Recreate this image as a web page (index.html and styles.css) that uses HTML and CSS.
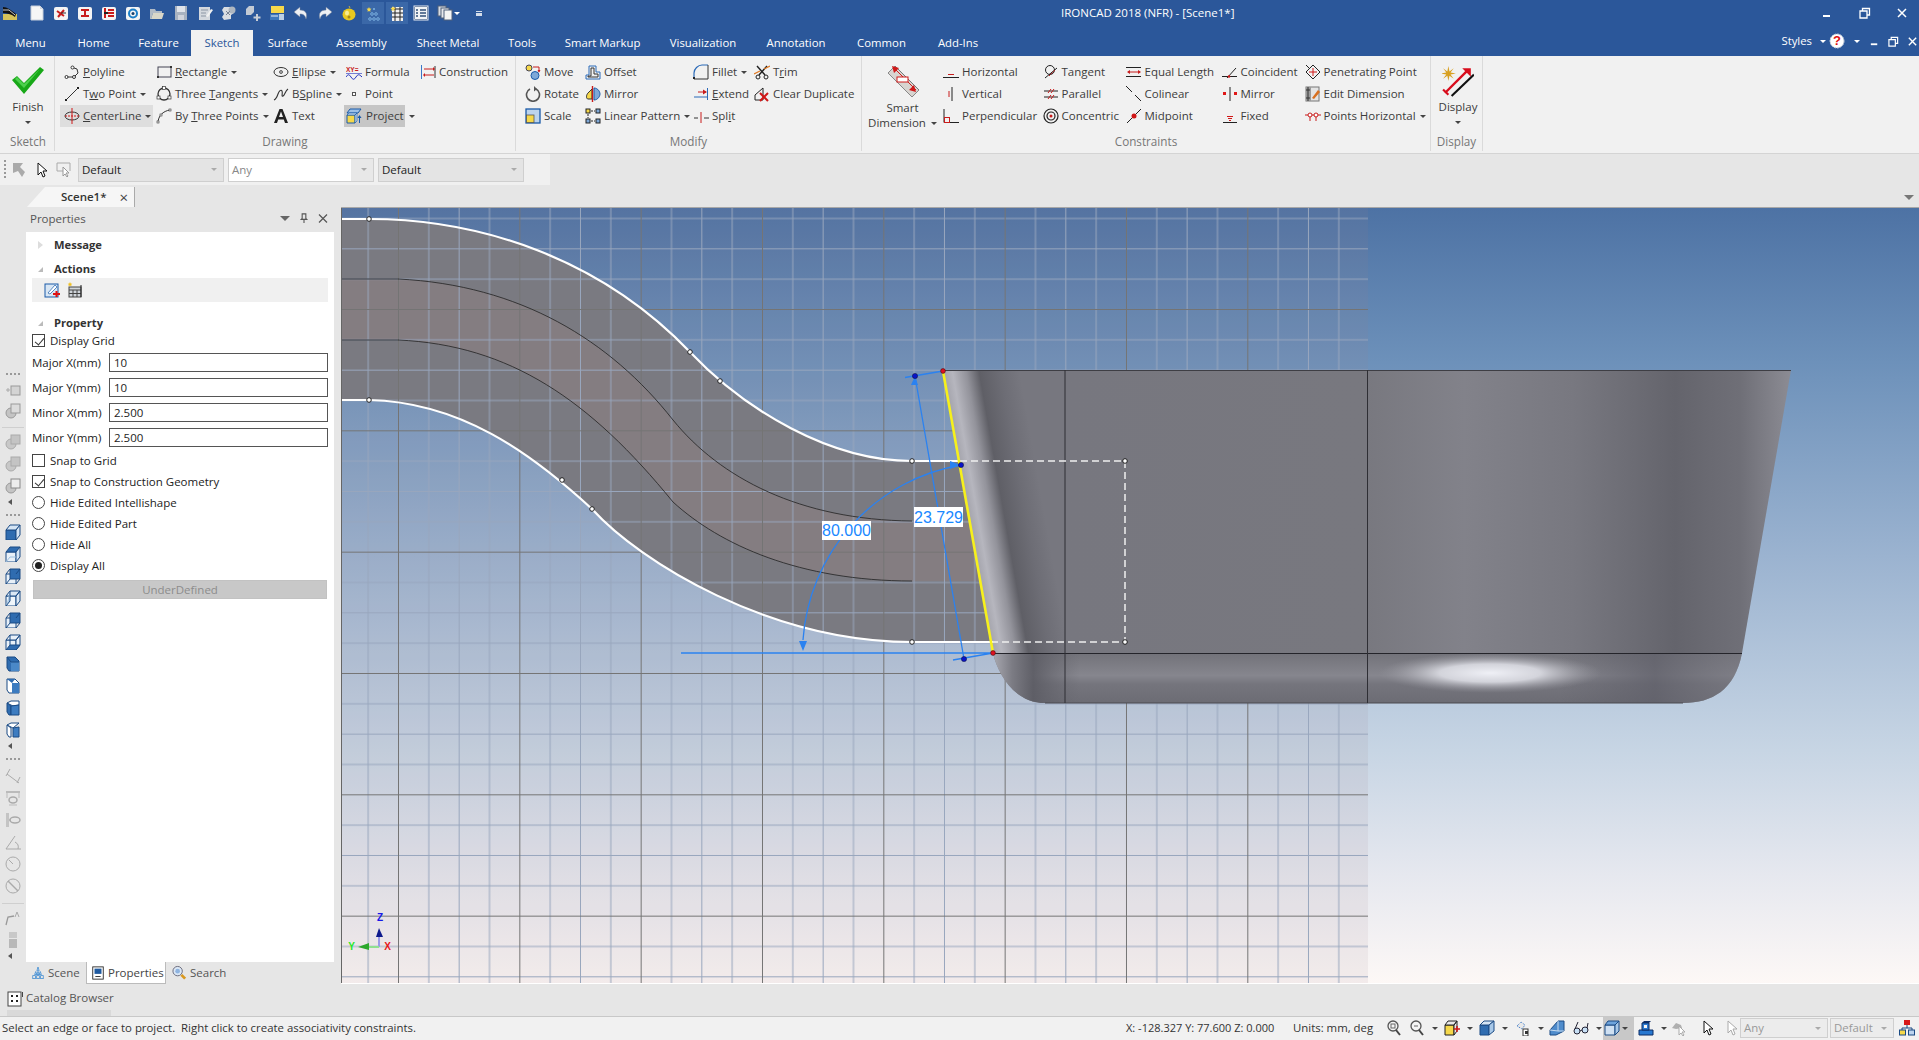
FILE: index.html
```html
<!DOCTYPE html>
<html lang="en">
<head>
<meta charset="utf-8">
<title>IRONCAD 2018 (NFR) - [Scene1*]</title>
<link rel="stylesheet" href="styles.css">
</head>
<body>
<svg class="sprite" aria-hidden="true">
<defs>
<!-- quick access -->
<symbol id="q-logo" viewBox="0 0 16 16"><rect x="1" y="9" width="14" height="6" fill="#d6c35a"/><path d="M1 2c4 0 8 3 13 7l-1 3C9 9 5 8 1 8z" fill="#111"/><path d="M1 5l6 0 6 5" stroke="#ccc" fill="none"/></symbol>
<symbol id="q-new" viewBox="0 0 16 16"><path d="M2 1h9l3 3v11H2z" fill="#f6f6f6" stroke="#c8d0dc"/><path d="M11 1v3h3" fill="#cfd6e0"/></symbol>
<symbol id="q-cross" viewBox="0 0 16 16"><rect x="1" y="2" width="14" height="13" rx="2" fill="#f4f4f4"/><path d="M4 6l7 5M11 5l-6 7" stroke="#c81c1c" stroke-width="2"/><path d="M8 8h5" stroke="#333"/></symbol>
<symbol id="q-i" viewBox="0 0 16 16"><rect x="1" y="2" width="14" height="13" rx="2" fill="#f4f4f4"/><path d="M4 4h8v2H9v4h3v2H4v-2h3V6H4z" fill="#c81c1c"/></symbol>
<symbol id="q-e" viewBox="0 0 16 16"><rect x="1" y="2" width="14" height="13" rx="2" fill="#f4f4f4"/><path d="M4 3v10M7 5h6M7 8h6M7 11h6" stroke="#c81c1c" stroke-width="2"/><path d="M3 8h4" stroke="#222" stroke-width="2"/></symbol>
<symbol id="q-c" viewBox="0 0 16 16"><rect x="1" y="2" width="14" height="13" rx="2" fill="#f4f4f4"/><circle cx="8" cy="8.500" r="4" fill="none" stroke="#1c7fc8" stroke-width="2"/><circle cx="8" cy="8.500" r="1.500" fill="#17406e"/></symbol>
<symbol id="q-open" viewBox="0 0 16 16"><path d="M1 4h5l1 2h6v2H4l-2 6H1z" fill="#b0bac6"/><path d="M4 8h11l-2 6H2z" fill="#d8d6c8"/></symbol>
<symbol id="q-save" viewBox="0 0 16 16"><path d="M2 1h12v14H2z" fill="#a8b2c0"/><rect x="4" y="1" width="8" height="6" fill="#e0e4ea"/><rect x="5" y="10" width="6" height="5" fill="#d0d4dc"/></symbol>
<symbol id="q-sa" viewBox="0 0 16 16"><path d="M2 2h11v13H2z" fill="#d4d8de"/><path d="M4 5h7M4 8h5M4 11h5" stroke="#8c96a4"/><path d="M9 11l5-7 2 1-5 7z" fill="#f0f0f0"/></symbol>
<symbol id="q-gear" viewBox="0 0 16 16"><path d="M3 2h6l4 2v4l-3 2v4l-7 1-2-3 2-3-2-4z" fill="#d9dde2"/><circle cx="11" cy="5" r="3.500" fill="#aeb6c0"/><path d="M5 6l4 4M9 6l-4 4" stroke="#7a8494"/></symbol>
<symbol id="q-boxes" viewBox="0 0 16 16"><path d="M1 4l3-3h5v6l-3 3H1z" fill="#c3cad4"/><path d="M12 9v7M8.500 12.500h7" stroke="#c7cdd6" stroke-width="2"/></symbol>
<symbol id="q-star" viewBox="0 0 16 16"><rect x="2" y="1" width="13" height="7" fill="#f6d84a"/><rect x="1" y="9" width="9" height="6" fill="#3e78bc"/><path d="M10 9h5v6h-5z" fill="#bcd0e6"/><path d="M2 11h7" stroke="#e8eef6"/></symbol>
<symbol id="q-undo" viewBox="0 0 16 16"><path d="M7 2L1 7l6 5V9c3 0 5 1 6 5 2-6-1-9-6-9z" fill="#eef0f4" stroke="#6a7a94" stroke-width=".5"/></symbol>
<symbol id="q-redo" viewBox="0 0 16 16"><path d="M9 2l6 5-6 5V9c-3 0-5 1-6 5C1 8 4 5 9 5z" fill="#eef0f4" stroke="#6a7a94" stroke-width=".5"/></symbol>
<symbol id="q-bulb" viewBox="0 0 16 16"><path d="M8 1l1 2" stroke="#c8b040"/><ellipse cx="8" cy="9.500" rx="6.500" ry="6" fill="#e8c820"/><ellipse cx="6" cy="8" rx="2" ry="2.500" fill="#f8ec90"/><circle cx="8" cy="12" r="1.500" fill="#a88a18"/></symbol>
<symbol id="q-tree" viewBox="0 0 16 16"><path d="M4 2l.7 1.600 1.800.2-1.300 1.200.3 1.800L4 6l-1.500.8.300-1.800-1.300-1.200 1.800-.2z" fill="#f6d84a"/><circle cx="9" cy="4" r="1.100" fill="#7ab0e0"/><circle cx="7" cy="9" r="1.300" fill="none" stroke="#7ab0e0"/><circle cx="11" cy="9" r="1.300" fill="none" stroke="#7ab0e0"/><circle cx="5" cy="14" r="1.300" fill="none" stroke="#7ab0e0"/><circle cx="9" cy="14" r="1.300" fill="none" stroke="#7ab0e0"/><circle cx="13" cy="14" r="1.300" fill="none" stroke="#7ab0e0"/></symbol>
<symbol id="q-film" viewBox="0 0 16 16"><rect x="3" y="2" width="11" height="14" fill="#f2f2f2"/><path d="M3 4h11M3 8h11M3 12h11M6 2v14M11 2v14" stroke="#222"/><path d="M4 1l.8 1.800 1.800.2-1.300 1.300.3 1.700L4 5.200l-1.600.8.300-1.700L1.400 3l1.800-.2z" fill="#f6d84a"/></symbol>
<symbol id="q-list" viewBox="0 0 16 16"><rect x="1" y="1" width="14" height="14" fill="#22406e" stroke="#e8ecf2"/><rect x="2" y="2" width="12" height="12" fill="#f2f4f6"/><path d="M3 5h2M7 5h6M3 8h2M7 8h6M3 11h2M7 11h6" stroke="#33507a" stroke-width="1.300"/></symbol>
<symbol id="q-copy" viewBox="0 0 16 16"><rect x="1" y="1" width="8" height="10" fill="#d8dce2" stroke="#50607a"/><rect x="4" y="3" width="8" height="10" fill="#e6e8ec" stroke="#50607a"/><rect x="7" y="5" width="8" height="10" fill="#f4f4f4" stroke="#50607a"/></symbol>
<!-- ribbon -->
<symbol id="r-polyline" viewBox="0 0 16 16"><path d="M3 13h7M11 12l3-3-1-4-3-1" fill="none" stroke="#333"/><circle cx="2.500" cy="13" r="1.500" fill="#fff" stroke="#333"/><circle cx="10" cy="13" r="1.500" fill="#fff" stroke="#333"/><circle cx="8.500" cy="3.500" r="1.500" fill="#fff" stroke="#333"/></symbol>
<symbol id="r-rect" viewBox="0 0 16 16"><rect x="2" y="3" width="13" height="10" fill="none" stroke="#445"/><rect x="1" y="12" width="2" height="2" fill="#333"/><rect x="14" y="2" width="2" height="2" fill="#333"/></symbol>
<symbol id="r-ellipse" viewBox="0 0 16 16"><ellipse cx="8" cy="8" rx="7" ry="4.500" fill="none" stroke="#333"/><path d="M8 6v4M6 8h4" stroke="#333"/><rect x="7" y="7" width="2" height="2" fill="#fff" stroke="#333" stroke-width=".6"/></symbol>
<symbol id="r-formula" viewBox="0 0 16 16"><text x="0" y="8" class="svgmini" fill="#c81c1c">XY=</text><path d="M0 13c2-3 3-3 5 0s3 3 5 0 3-3 6 0" fill="none" stroke="#2030c0"/><path d="M0 9.500h16" stroke="#2030c0" stroke-width=".6"/></symbol>
<symbol id="r-constr" viewBox="0 0 16 16"><path d="M1.500 1v14" stroke="#3a78c8"/><path d="M15 2v12" stroke="#333"/><path d="M4 5h10M4 11h10" stroke="#c81c1c"/><path d="M13 3l2 2-2 2zM5 9l-2 2 2 2z" fill="#c81c1c"/></symbol>
<symbol id="r-twopoint" viewBox="0 0 16 16"><path d="M2 14L14 2" stroke="#333"/><rect x="1" y="13" width="2" height="2" fill="#222"/><rect x="13" y="1" width="2" height="2" fill="#222"/></symbol>
<symbol id="r-tangents" viewBox="0 0 16 16"><circle cx="8" cy="8" r="6" fill="none" stroke="#333" stroke-width="1.300"/><rect x="6.500" y="0.500" width="3" height="3" fill="#fff" stroke="#333" stroke-width=".7"/><rect x="1" y="10" width="3" height="3" fill="#fff" stroke="#333" stroke-width=".7"/><rect x="12" y="10" width="3" height="3" fill="#fff" stroke="#333" stroke-width=".7"/></symbol>
<symbol id="r-bspline" viewBox="0 0 16 16"><path d="M1 14c2-1 3-3 4-6s3-5 4-3-1 6 1 5 2-5 5-7" fill="none" stroke="#333" stroke-width="1.100"/></symbol>
<symbol id="r-point" viewBox="0 0 16 16"><rect x="6.500" y="6.500" width="3" height="3" fill="#fff" stroke="#555"/></symbol>
<symbol id="r-center" viewBox="0 0 16 16"><ellipse cx="8" cy="8" rx="7" ry="4" fill="none" stroke="#333"/><path d="M8 0v16" stroke="#d01818"/><path d="M1 8h14" stroke="#d01818" stroke-dasharray="2 1"/></symbol>
<symbol id="r-arc" viewBox="0 0 16 16"><path d="M2 15C2 8 7 3 14 2" fill="none" stroke="#333"/><rect x="1" y="13" width="2" height="2" fill="#fff" stroke="#333" stroke-width=".6"/><rect x="13" y="1" width="2" height="2" fill="#fff" stroke="#333" stroke-width=".6"/><rect x="4" y="6" width="2" height="2" fill="#fff" stroke="#333" stroke-width=".6"/></symbol>
<symbol id="r-text" viewBox="0 0 16 16"><path d="M1 15L6.500 1h3L15 15h-3l-1.200-3.500H5.200L4 15zM6 9h4L8 3.500z" fill="#222"/></symbol>
<symbol id="r-project" viewBox="0 0 16 16"><path d="M4 1h11l-3 4H1z" fill="#9cc0e8" stroke="#1a5aa8"/><path d="M1 7h8v8H1z" fill="#f6d84a" stroke="#1a5aa8"/><path d="M1 7l2-2h8l-2 2zM9 7l2-2v8l-2 2z" fill="#bcd4ee" stroke="#1a5aa8" stroke-width=".6"/><path d="M13.500 15V8" stroke="#1a5aa8"/><path d="M11.500 10l2-3 2 3z" fill="#1a5aa8"/></symbol>
<symbol id="r-move" viewBox="0 0 16 16"><circle cx="4" cy="4" r="3" fill="#f6d84a" stroke="#445"/><circle cx="10" cy="11.500" r="4" fill="#7ea8d8" stroke="#1a5aa8"/><path d="M8 3h6v5" fill="none" stroke="#c81c1c"/><path d="M12.500 6h3L14 8.500z" fill="#c81c1c"/></symbol>
<symbol id="r-offset" viewBox="0 0 16 16"><path d="M1 15V11h3V2h7v6h4v7z" fill="none" stroke="#2a6ab8"/><path d="M3 13v-1h3V4h3v6h4v3z" fill="none" stroke="#333"/></symbol>
<symbol id="r-rotate" viewBox="0 0 16 16"><path d="M5 3a6.500 6.500 0 1 0 6 0" fill="none" stroke="#555" stroke-width="1.600"/><path d="M9 0l3 3-3 2.500z" fill="#555"/></symbol>
<symbol id="r-mirror" viewBox="0 0 16 16"><path d="M7 3v10H3C1 13 1 9 3 7z" fill="#f6d84a" stroke="#333"/><path d="M7.500 0v16" stroke="#c81c1c" stroke-width="1.400"/><path d="M9 2c4 0 6 4 6 6s-2 6-6 6z" fill="#7ea8d8" stroke="#1a5aa8"/></symbol>
<symbol id="r-scale" viewBox="0 0 16 16"><rect x="1" y="1" width="14" height="14" fill="#bcd4ee" stroke="#1a5aa8" stroke-width="1.300"/><rect x="1.500" y="7" width="7.500" height="7.500" fill="#f6d84a" stroke="#555" stroke-width=".8"/></symbol>
<symbol id="r-pattern" viewBox="0 0 16 16"><rect x="1" y="1" width="4" height="4" fill="#f6d84a" stroke="#222"/><rect x="11" y="1" width="4" height="4" fill="#7ea8d8" stroke="#222"/><rect x="1" y="11" width="4" height="4" fill="#7ea8d8" stroke="#222"/><rect x="11" y="11" width="4" height="4" fill="#7ea8d8" stroke="#222"/><path d="M6 3h4M6 13h4M3 6v4" stroke="#222" stroke-dasharray="2 1"/></symbol>
<symbol id="r-fillet" viewBox="0 0 16 16"><path d="M1 15V9C1 5 5 1 9 1h6" fill="none" stroke="#2a6ab8" stroke-width="1.200"/><path d="M15 1v14H1" fill="none" stroke="#333"/><rect x="0" y="13" width="2" height="2" fill="#222"/></symbol>
<symbol id="r-trim" viewBox="0 0 16 16"><path d="M3 2l8 9M13 2L5 11" stroke="#222" stroke-width="1.400"/><circle cx="4" cy="13" r="2" fill="none" stroke="#222"/><circle cx="12" cy="13" r="2" fill="none" stroke="#222"/><path d="M0 10l6-3M10 5l6-3" stroke="#e07820" stroke-width="1.200"/></symbol>
<symbol id="r-extend" viewBox="0 0 16 16"><path d="M14.500 2v12" stroke="#2a6ab8"/><path d="M1 11h13" stroke="#2a6ab8"/><path d="M5 6h8" stroke="#c81c1c"/><path d="M10 3.500l4 2.500-4 2.500z" fill="#c81c1c"/></symbol>
<symbol id="r-clear" viewBox="0 0 16 16"><path d="M1 9l8-7v12H1z" fill="none" stroke="#222"/><path d="M6 7l8 8M14 7l-8 8" stroke="#d01818" stroke-width="2"/></symbol>
<symbol id="r-split" viewBox="0 0 16 16"><path d="M1 10h4M11 10h5" stroke="#333"/><path d="M8 4v11" stroke="#c81c1c"/></symbol>
<symbol id="r-horiz" viewBox="0 0 16 16"><path d="M0 13.500h16" stroke="#222"/><path d="M5 10.500h6" stroke="#c81c1c"/></symbol>
<symbol id="r-vert" viewBox="0 0 16 16"><path d="M9 1v14" stroke="#222"/><path d="M6 5v6" stroke="#c81c1c"/></symbol>
<symbol id="r-perp" viewBox="0 0 16 16"><path d="M1 1v13.500h15" fill="none" stroke="#222"/><rect x="1.500" y="9.500" width="5" height="5" fill="none" stroke="#c81c1c"/></symbol>
<symbol id="r-tan" viewBox="0 0 16 16"><circle cx="7" cy="6" r="4.500" fill="none" stroke="#222"/><path d="M2 14L14 4" stroke="#222"/><path d="M6 12l6-6" stroke="#c81c1c" stroke-dasharray="2 1"/></symbol>
<symbol id="r-par" viewBox="0 0 16 16"><path d="M1 5h14M1 11h14" stroke="#222"/><path d="M5 7l3-4M8 7l3-4M5 13l3-4M8 13l3-4" stroke="#c81c1c"/></symbol>
<symbol id="r-conc" viewBox="0 0 16 16"><circle cx="8" cy="8" r="7" fill="none" stroke="#222" stroke-width="1.200"/><circle cx="8" cy="8" r="4" fill="none" stroke="#222" stroke-width="1.200"/><circle cx="8" cy="8" r="1.500" fill="#c81c1c"/></symbol>
<symbol id="r-eq" viewBox="0 0 16 16"><path d="M0 3.500h15M0 12.500h15" stroke="#222"/><path d="M2 8h12" stroke="#c81c1c"/><path d="M1 8l3-2v4zM15 8l-3-2v4z" fill="#c81c1c"/></symbol>
<symbol id="r-col" viewBox="0 0 16 16"><path d="M0 0l6 6M9 9l6 6" stroke="#222"/></symbol>
<symbol id="r-mid" viewBox="0 0 16 16"><path d="M1 15L15 1" stroke="#222"/><circle cx="8" cy="8" r="2.500" fill="#d01818"/></symbol>
<symbol id="r-coin" viewBox="0 0 16 16"><path d="M0 12.500h15M5 14L14 4" stroke="#222"/><circle cx="7" cy="12.500" r="1.300" fill="#d01818"/></symbol>
<symbol id="r-mirc" viewBox="0 0 16 16"><path d="M8 1v14" stroke="#222"/><rect x="1" y="6" width="3" height="3" fill="#e01818"/><rect x="12" y="6" width="3" height="3" fill="#e01818"/></symbol>
<symbol id="r-fixed" viewBox="0 0 16 16"><path d="M1 14.500h14" stroke="#222"/><path d="M5 8.500h6M6 10.500h4M7 12.500h2" stroke="#d01818"/></symbol>
<symbol id="r-pen" viewBox="0 0 16 16"><path d="M8 1l7 7-7 7-7-7z" fill="none" stroke="#222"/><path d="M8 4v8M4 8h8" stroke="#d01818"/><path d="M1 1l3 3" stroke="#222"/></symbol>
<symbol id="r-edit" viewBox="0 0 16 16"><rect x="1" y="1" width="13" height="14" fill="#e4e4e4" stroke="#777"/><path d="M1 1h5v14H1z" fill="#9a9a9a"/><path d="M3 1v14M1 4h4M1 12h4" stroke="#333"/><path d="M7 12l6-8 2 2-6 7z" fill="#d87020"/></symbol>
<symbol id="r-pth" viewBox="0 0 16 16"><path d="M0 7h16" stroke="#c81c1c"/><path d="M5 7v6M11 7v6" stroke="#c81c1c"/><circle cx="5" cy="7" r="2" fill="#fff" stroke="#c81c1c"/><circle cx="11" cy="7" r="2" fill="#fff" stroke="#c81c1c"/></symbol>
<symbol id="r-check" viewBox="0 0 34 28"><path d="M1 14l5-4 7 7L29 1l4 3-20 24z" fill="#18a818"/><path d="M4 13l2-2 7 7L29 3l-16 19z" fill="#4cd04c"/></symbol>
<symbol id="r-smart" viewBox="0 0 32 32"><path d="M1 8L8 1l24 24-7 7z" fill="#d8d4d0" stroke="#888"/><path d="M8 1l24 24" stroke="#777"/><path d="M4 3l9 0M4 3l0 9" stroke="none"/><path d="M7 3l22 22" stroke="#d01818"/><path d="M5 1l7 2-5 5zM29 27l-7-2 5-5z" fill="#d01818"/><rect x="10" y="12" width="11" height="5" fill="#fff" stroke="#d01818"/></symbol>
<symbol id="r-display" viewBox="0 0 30 30"><path d="M6 1l1 5 4-3-3 4 5 1-5 1 3 4-4-3-1 5-1-5-4 3 3-4-5-1 5-1-3-4 4 3z" fill="#d8a020"/><path d="M3 26L24 5" stroke="#d80c1c" stroke-width="2.200"/><path d="M1 23l5 5" stroke="#d80c1c" stroke-width="2"/><path d="M19 3h8v8z" fill="#d80c1c"/><path d="M9 29L30 9" stroke="#111" stroke-width="2"/></symbol>
<!-- small panel icons -->
<symbol id="p-new" viewBox="0 0 16 16"><rect x="1" y="2" width="13" height="13" fill="#d8e6f4" stroke="#1a5aa8"/><path d="M4 11l7-8 2 2-7 7z" fill="#fff" stroke="#1a5aa8" stroke-width=".7"/><path d="M9 12h7M12.500 9v6" stroke="#e01010" stroke-width="2"/></symbol>
<symbol id="p-cal" viewBox="0 0 16 16"><path d="M4 0l.7 1.500 1.600.2-1.100 1 .3 1.600L4 3.500 2.500 4.300l.3-1.600-1.100-1 1.600-.2z" fill="#f0c020"/><rect x="3" y="5" width="12" height="10" fill="#cfd4da" stroke="#444"/><path d="M3 8h12M7 8v7M11 8v7M3 11.500h12" stroke="#444"/><path d="M15 3v12" stroke="#222"/></symbol>
<symbol id="p-scene" viewBox="0 0 16 16"><path d="M8 0l1.500 5h-3zM5 6l1.500 4h-3zM11 6l1.500 4h-3zM8 6l1.500 4h-3z" fill="#c4dcf2" stroke="#3a88d0"/><rect x="1" y="11.500" width="3.500" height="4" fill="none" stroke="#3a88d0"/><rect x="6.250" y="11.500" width="3.500" height="4" fill="none" stroke="#3a88d0"/><rect x="11.500" y="11.500" width="3.500" height="4" fill="none" stroke="#3a88d0"/></symbol>
<symbol id="p-props" viewBox="0 0 16 16"><rect x="2" y="1" width="12" height="14" fill="#fff" stroke="#222"/><rect x="4" y="3" width="8" height="6" fill="#1f5aa0"/><path d="M5 12h6" stroke="#222"/></symbol>
<symbol id="p-search" viewBox="0 0 16 16"><circle cx="6" cy="6" r="5" fill="#dce8f6" stroke="#667"/><circle cx="6" cy="6" r="2.500" fill="#8fb4e0"/><path d="M10 10l4 4" stroke="#d89820" stroke-width="3"/></symbol>
<symbol id="p-cat" viewBox="0 0 16 16"><rect x="1" y="1" width="13" height="14" fill="#fff" stroke="#444"/><path d="M4 4h2v2H4zM9 4h2v2H9zM4 9h2v2H4zM9 9h2v2H9z" fill="#222"/><path d="M15.500 1v5" stroke="#444"/></symbol>
<!-- left toolbar -->
<symbol id="t-add" viewBox="0 0 16 16"><rect x="6" y="3" width="9" height="9" fill="#d4d4d4" stroke="#999"/><path d="M1 7h4M3 5v4" stroke="#aaa"/></symbol>
<symbol id="t-ov" viewBox="0 0 16 16"><circle cx="6" cy="10" r="5" fill="#c4c4c4" stroke="#999"/><rect x="6" y="1" width="9" height="9" fill="#dcdcdc" stroke="#999"/></symbol>
<symbol id="t-ov2" viewBox="0 0 16 16"><circle cx="6" cy="10" r="5" fill="#c8c8c8" stroke="#aaa"/><rect x="6" y="1" width="9" height="9" fill="#c4c4c4" stroke="#aaa"/></symbol>
<symbol id="t-ov3" viewBox="0 0 16 16"><circle cx="6" cy="10" r="5" fill="#c4c4c4" stroke="#999"/><rect x="6" y="1" width="9" height="9" fill="#ececec" stroke="#888"/></symbol>
<symbol id="c-1" viewBox="0 0 16 16"><path d="M1 6h10v10H1z" fill="#2f6cb0" stroke="#1a4a84"/><path d="M1 6l4-5h10l-4 5z" fill="#d4e4f4" stroke="#1a4a84"/><path d="M11 6l4-5v10l-4 5z" fill="#d4e4f4" stroke="#1a4a84"/></symbol>
<symbol id="c-2" viewBox="0 0 16 16"><path d="M1 6h10v10H1z" fill="#e8f0f8" stroke="#1a4a84"/><path d="M1 6l4-5h10l-4 5z" fill="#2f6cb0" stroke="#1a4a84"/><path d="M11 6l4-5v10l-4 5z" fill="#d4e4f4" stroke="#1a4a84"/><path d="M1 16l4-5h6" fill="none" stroke="#9cc0e0"/></symbol>
<symbol id="c-3" viewBox="0 0 16 16"><path d="M1 6h10v10H1z" fill="#e8f0f8" stroke="#1a4a84"/><path d="M5 1h10v10H5z" fill="#2f6cb0" stroke="#1a4a84"/><path d="M1 6l4-5M11 6l4-5M1 16l4-5M11 16l4-5" stroke="#1a4a84"/></symbol>
<symbol id="c-4" viewBox="0 0 16 16"><path d="M1 6h10v10H1z" fill="#f0f6fb" stroke="#1a4a84"/><path d="M1 6l4-5h10l-4 5zM11 6l4-5v10l-4 5z" fill="#dce8f4" stroke="#1a4a84"/><path d="M1 16l4-5v-10" fill="#b0cce6" stroke="#1a4a84"/></symbol>
<symbol id="c-5" viewBox="0 0 16 16"><path d="M1 6h10v10H1z" fill="#e8f0f8" stroke="#1a4a84"/><path d="M1 6l4-5h10l-4 5zM11 6l4-5v10l-4 5z" fill="#e8f0f8" stroke="#1a4a84"/><path d="M5 11h10l-4 5H1z" fill="#2f6cb0" stroke="#1a4a84"/><path d="M5 1v10" stroke="#1a4a84"/></symbol>
<symbol id="c-6" viewBox="0 0 16 16"><path d="M2 1h8l4 4v10H4l-2-3z" fill="#2f6cb0" stroke="#1a4a84"/><rect x="6" y="6" width="8" height="9" fill="#4a88c8"/><path d="M6 6L2 1M6 6h8" stroke="#1a4a84"/></symbol>
<symbol id="c-7" viewBox="0 0 16 16"><path d="M2 1h8l4 4v10H4l-2-3z" fill="#fff" stroke="#1a4a84"/><rect x="7" y="5" width="7" height="10" fill="#3d7cc0"/><path d="M2 1h8l-3 4z" fill="#2f6cb0"/></symbol>
<symbol id="c-8" viewBox="0 0 16 16"><path d="M2 3l4-2h8v4l-6 1z" fill="#fff" stroke="#1a4a84"/><path d="M2 3l4 3v9l-2 0-2-3z" fill="#2f6cb0" stroke="#1a4a84"/><path d="M6 6l8-1v10H6z" fill="#3d7cc0" stroke="#1a4a84"/></symbol>
<symbol id="c-9" viewBox="0 0 16 16"><path d="M2 3l4-2h8l-6 5z" fill="#fff" stroke="#1a4a84"/><path d="M2 3l4 3v9H4l-2-3z" fill="#fff" stroke="#1a4a84"/><path d="M8 6l6-1v10H8z" fill="#3d7cc0" stroke="#1a4a84"/></symbol>
<symbol id="t-dim" viewBox="0 0 16 16"><path d="M2 6l12 9M5 1L1 8M15 9l-3 6" stroke="#aaa" fill="none"/></symbol>
<symbol id="t-dv" viewBox="0 0 16 16"><path d="M1 1h14v2H1z" fill="#bbb"/><path d="M2 3v5M14 3v5" stroke="#bbb"/><ellipse cx="8" cy="10" rx="4" ry="3" fill="none" stroke="#aaa" stroke-width="1.500"/><path d="M4 15h8" stroke="#bbb"/></symbol>
<symbol id="t-dh" viewBox="0 0 16 16"><path d="M1 1h3v14H1z" fill="#c4c4c4"/><ellipse cx="10" cy="8" rx="5" ry="3" fill="none" stroke="#aaa" stroke-width="1.500"/><path d="M4 8h2" stroke="#aaa"/></symbol>
<symbol id="t-ang" viewBox="0 0 16 16"><path d="M1 15h15M1 15L10 2M10 8a6 6 0 0 1 3 7" fill="none" stroke="#aaa"/></symbol>
<symbol id="t-rad" viewBox="0 0 16 16"><circle cx="8" cy="8" r="7" fill="none" stroke="#aaa"/><path d="M8 8L4 4" stroke="#aaa"/></symbol>
<symbol id="t-dia" viewBox="0 0 16 16"><circle cx="8" cy="8" r="7" fill="none" stroke="#aaa"/><path d="M3 3l10 10" stroke="#aaa" stroke-width="1.400"/></symbol>
<symbol id="t-lead" viewBox="0 0 16 16"><path d="M1 15l2-8 6-1" fill="none" stroke="#999" stroke-width="1.300"/><path d="M10 7l2-5 2 5" fill="none" stroke="#aaa"/></symbol>
<symbol id="t-stack" viewBox="0 0 16 16"><path d="M4 1h8M4 3h8M4 5h8" stroke="#aaa"/><rect x="4" y="7" width="8" height="9" fill="#b8b8b8"/></symbol>
<!-- status -->
<symbol id="s-zoom" viewBox="0 0 16 16"><circle cx="7" cy="6" r="5" fill="#f4f4f4" stroke="#555" stroke-width="1.300"/><rect x="5" y="4" width="4" height="4" fill="none" stroke="#666"/><path d="M10 10l4 5" stroke="#444" stroke-width="2"/></symbol>
<symbol id="s-zoom2" viewBox="0 0 16 16"><circle cx="7" cy="6" r="5" fill="#f4f4f4" stroke="#555" stroke-width="1.300"/><path d="M5 6h4" stroke="#666"/><path d="M10 10l4 5" stroke="#444" stroke-width="2"/></symbol>
<symbol id="s-y" viewBox="0 0 16 16"><path d="M1 5h9v10H1z" fill="#f6d84a" stroke="#222"/><path d="M1 5l3-4h9l-3 4zM10 5l3-4v10l-3 4z" fill="#e8e8e8" stroke="#222"/><path d="M10 9h6M13 6v6" stroke="#d01818" stroke-width="1.500"/></symbol>
<symbol id="s-blue" viewBox="0 0 16 16"><path d="M1 5h9v10H1z" fill="#2f6cb0" stroke="#1a4a84"/><path d="M1 5l4-4h10l-5 4z" fill="#d4e4f4" stroke="#1a4a84"/><path d="M10 5l5-4v10l-5 4z" fill="#a8c8e8" stroke="#1a4a84"/></symbol>
<symbol id="s-fig" viewBox="0 0 16 16"><path d="M2 6l4-4 4 3-3 4z" fill="#e8e8e8" stroke="#3a78c8" stroke-dasharray="1 1"/><rect x="8" y="9" width="5" height="7" fill="#fff" stroke="#333"/><rect x="10" y="11" width="3" height="3" fill="#333"/></symbol>
<symbol id="s-wedge" viewBox="0 0 16 16"><path d="M1 10l8-9h6v10l-8 4H1z" fill="#4f8ccc" stroke="#1a4a84"/><path d="M9 1v10l6 0M9 11l-8-1" stroke="#c8dcf0" fill="none"/></symbol>
<symbol id="s-glass" viewBox="0 0 16 16"><circle cx="4" cy="11" r="3" fill="#c8e0f6" stroke="#223"/><circle cx="12" cy="10" r="3" fill="#c8e0f6" stroke="#223"/><path d="M2 9L5 2M7 11l2-1M14 8l1-5" stroke="#223" fill="none"/></symbol>
<symbol id="s-box" viewBox="0 0 16 16"><path d="M1 5h10v10H1z" fill="#cfe0f2" stroke="#1a4a84"/><path d="M1 5l3-4h11l-4 4z" fill="#6ea4dc" stroke="#1a4a84"/><path d="M11 5l4-4v10l-4 4z" fill="#a8c8e8" stroke="#1a4a84"/></symbol>
<symbol id="s-step" viewBox="0 0 16 16"><path d="M1 10h14v5H1z" fill="#2878d0" stroke="#0c2c64"/><path d="M4 3h7v7H4z" fill="#2878d0" stroke="#0c2c64"/><path d="M4 3l2-2h7l-2 2z" fill="#0c2c64"/><rect x="6" y="5" width="3" height="3" fill="#f4f4f4"/></symbol>
<symbol id="s-sel" viewBox="0 0 16 16"><path d="M2 8l4-5 5 2 1 3-6 1z" fill="#b0b0b0"/><path d="M9 6l0 9 2-2 2 3 1-1-2-3h3z" fill="#fff" stroke="#aaa"/></symbol>
<symbol id="s-arrow" viewBox="0 0 16 16"><path d="M4 1v12l3-3 2 5 2-1-2-5h4z" fill="#fff" stroke="#111"/></symbol>
<symbol id="s-arrow2" viewBox="0 0 16 16"><path d="M4 1v12l3-3 2 5 2-1-2-5h4z" fill="#fff" stroke="#aaa"/></symbol>
<symbol id="s-org" viewBox="0 0 16 16"><rect x="5" y="0" width="6" height="5" fill="#d81818"/><path d="M8 5v3M3 8h10M3 8v2M13 8v2" stroke="#1a4a84"/><rect x="0.500" y="10" width="6" height="5" fill="#f6d84a" stroke="#1a4a84"/><rect x="9.500" y="10" width="6" height="5" fill="#bcd4ee" stroke="#1a4a84"/></symbol>
<symbol id="b-sel" viewBox="0 0 16 16"><path d="M1 1h10l-3 4 5 5-3 5-4-6-5 2z" fill="#aaa"/></symbol>
<symbol id="b-box" viewBox="0 0 16 16"><path d="M1 1h13v8" fill="none" stroke="#aaa"/><path d="M1 1v8h6" fill="none" stroke="#aaa"/><path d="M7 5v9l2-2 2 3 1-1-2-3h3z" fill="#fff" stroke="#999"/></symbol>
</defs>
</svg>

<header class="titlebar">
  <div class="qat">
    <svg class="ic logo"><use href="#q-logo"/></svg>
    <svg class="ic"><use href="#q-new"/></svg>
    <svg class="ic"><use href="#q-cross"/></svg>
    <svg class="ic"><use href="#q-i"/></svg>
    <svg class="ic"><use href="#q-e"/></svg>
    <svg class="ic"><use href="#q-c"/></svg>
    <svg class="ic"><use href="#q-open"/></svg>
    <svg class="ic"><use href="#q-save"/></svg>
    <svg class="ic"><use href="#q-sa"/></svg>
    <svg class="ic"><use href="#q-gear"/></svg>
    <svg class="ic"><use href="#q-boxes"/></svg>
    <svg class="ic"><use href="#q-star"/></svg>
    <svg class="ic"><use href="#q-undo"/></svg>
    <svg class="ic"><use href="#q-redo"/></svg>
    <svg class="ic"><use href="#q-bulb"/></svg>
    <svg class="ic qon"><use href="#q-tree"/></svg>
    <svg class="ic qon"><use href="#q-film"/></svg>
    <svg class="ic"><use href="#q-list"/></svg>
    <svg class="ic"><use href="#q-copy"/></svg>
    <span class="caret white"></span>
    <span class="qat-more"></span>
  </div>
  <div class="title">IRONCAD 2018 (NFR) - [Scene1*]</div>
  <div class="winbtns">
    <svg class="wb" viewBox="0 0 12 12"><path d="M1 9h7" stroke="#fff" stroke-width="2"/></svg>
    <svg class="wb" viewBox="0 0 12 12"><path d="M1 4h7v7H1zM3.500 4V1.500h7v6.500H8" fill="none" stroke="#fff" stroke-width="1.300"/></svg>
    <svg class="wb" viewBox="0 0 12 12"><path d="M2 2l8 8M10 2l-8 8" stroke="#fff" stroke-width="1.500"/></svg>
  </div>
</header>

<nav class="tabs">
  <div class="tabstrip">
    <span class="tab">Menu</span>
    <span class="tab">Home</span>
    <span class="tab">Feature</span>
    <span class="tab active">Sketch</span>
    <span class="tab">Surface</span>
    <span class="tab">Assembly</span>
    <span class="tab">Sheet Metal</span>
    <span class="tab">Tools</span>
    <span class="tab">Smart Markup</span>
    <span class="tab">Visualization</span>
    <span class="tab">Annotation</span>
    <span class="tab">Common</span>
    <span class="tab">Add-Ins</span>
  </div>
  <div class="tabs-right">
    <span class="styles">Styles</span>
    <span class="caret white"></span>
    <svg class="help" viewBox="0 0 16 16"><circle cx="8" cy="8" r="7" fill="#fff" stroke="#c8d0dc" stroke-dasharray="2 1"/><text x="8" y="12" class="svghelp">?</text></svg>
    <span class="caret white"></span>
    <svg class="wb sm" viewBox="0 0 12 12"><path d="M2 9h7" stroke="#fff" stroke-width="2"/></svg>
    <svg class="wb sm" viewBox="0 0 12 12"><path d="M1 4h7v7H1zM3.500 4V1.500h7v6.500H8" fill="none" stroke="#fff" stroke-width="1.300"/></svg>
    <svg class="wb sm" viewBox="0 0 12 12"><path d="M2 2l8 8M10 2l-8 8" stroke="#fff" stroke-width="1.500"/></svg>
  </div>
</nav>

<section class="ribbon">
  <div class="group g-sketch">
    <div class="big finish">
      <svg class="check"><use href="#r-check"/></svg>
      <span>Finish</span>
      <span class="caret"></span>
    </div>
    <div class="glabel">Sketch</div>
  </div>

  <div class="group g-draw">
    <div class="rgrid draw-cols">
      <div class="ri"><svg class="ic"><use href="#r-polyline"/></svg><span><u>P</u>olyline</span></div>
      <div class="ri"><svg class="ic"><use href="#r-rect"/></svg><span><u>R</u>ectangle</span><span class="caret"></span></div>
      <div class="ri"><svg class="ic"><use href="#r-ellipse"/></svg><span><u>E</u>llipse</span><span class="caret"></span></div>
      <div class="ri"><svg class="ic"><use href="#r-formula"/></svg><span>Formula</span></div>
      <div class="ri"><svg class="ic"><use href="#r-constr"/></svg><span>Construction</span></div>
      <div class="ri"><svg class="ic"><use href="#r-twopoint"/></svg><span>T<u>w</u>o Point</span><span class="caret"></span></div>
      <div class="ri"><svg class="ic"><use href="#r-tangents"/></svg><span>Three <u>T</u>angents</span><span class="caret"></span></div>
      <div class="ri"><svg class="ic"><use href="#r-bspline"/></svg><span>B<u>S</u>pline</span><span class="caret"></span></div>
      <div class="ri"><svg class="ic"><use href="#r-point"/></svg><span>Point</span></div>
      <div></div>
      <div class="ri hl-soft"><svg class="ic"><use href="#r-center"/></svg><span><u>C</u>enterLine</span><span class="caret"></span></div>
      <div class="ri"><svg class="ic"><use href="#r-arc"/></svg><span>By <u>T</u>hree Points</span><span class="caret"></span></div>
      <div class="ri"><svg class="ic"><use href="#r-text"/></svg><span>Text</span></div>
      <div class="ri"><span class="hl-strong"><svg class="ic"><use href="#r-project"/></svg><span>Project</span></span><span class="caret"></span></div>
      <div></div>
    </div>
    <div class="glabel">Drawing</div>
  </div>

  <div class="group g-mod">
    <div class="rgrid mod-cols">
      <div class="ri"><svg class="ic"><use href="#r-move"/></svg><span>Move</span></div>
      <div class="ri"><svg class="ic"><use href="#r-offset"/></svg><span>Offset</span></div>
      <div class="ri"><svg class="ic"><use href="#r-fillet"/></svg><span>Fillet</span><span class="caret"></span></div>
      <div class="ri"><svg class="ic"><use href="#r-trim"/></svg><span>T<u>r</u>im</span></div>
      <div class="ri"><svg class="ic"><use href="#r-rotate"/></svg><span>Rotate</span></div>
      <div class="ri"><svg class="ic"><use href="#r-mirror"/></svg><span>Mirror</span></div>
      <div class="ri"><svg class="ic"><use href="#r-extend"/></svg><span><u>E</u>xtend</span></div>
      <div class="ri"><svg class="ic"><use href="#r-clear"/></svg><span>Clear Duplicate</span></div>
      <div class="ri"><svg class="ic"><use href="#r-scale"/></svg><span>Scale</span></div>
      <div class="ri"><svg class="ic"><use href="#r-pattern"/></svg><span>Linear Pattern</span><span class="caret"></span></div>
      <div class="ri"><svg class="ic"><use href="#r-split"/></svg><span>Spl<u>i</u>t</span></div>
      <div></div>
    </div>
    <div class="glabel">Modify</div>
  </div>

  <div class="group g-con">
    <div class="con-row">
      <div class="big smart">
        <svg class="bigic"><use href="#r-smart"/></svg>
        <span>Smart</span>
        <span>Dimension<span class="caret"></span></span>
      </div>
      <div class="rgrid con-cols">
        <div class="ri"><svg class="ic"><use href="#r-horiz"/></svg><span>Horizontal</span></div>
        <div class="ri"><svg class="ic"><use href="#r-tan"/></svg><span>Tangent</span></div>
        <div class="ri"><svg class="ic"><use href="#r-eq"/></svg><span>Equal Length</span></div>
        <div class="ri"><svg class="ic"><use href="#r-coin"/></svg><span>Coincident</span></div>
        <div class="ri"><svg class="ic"><use href="#r-pen"/></svg><span>Penetrating Point</span></div>
        <div class="ri"><svg class="ic"><use href="#r-vert"/></svg><span>Vertical</span></div>
        <div class="ri"><svg class="ic"><use href="#r-par"/></svg><span>Parallel</span></div>
        <div class="ri"><svg class="ic"><use href="#r-col"/></svg><span>Colinear</span></div>
        <div class="ri"><svg class="ic"><use href="#r-mirc"/></svg><span>Mirror</span></div>
        <div class="ri"><svg class="ic"><use href="#r-edit"/></svg><span>Edit Dimension</span></div>
        <div class="ri"><svg class="ic"><use href="#r-perp"/></svg><span>Perpendicular</span></div>
        <div class="ri"><svg class="ic"><use href="#r-conc"/></svg><span>Concentric</span></div>
        <div class="ri"><svg class="ic"><use href="#r-mid"/></svg><span>Midpoint</span></div>
        <div class="ri"><svg class="ic"><use href="#r-fixed"/></svg><span>Fixed</span></div>
        <div class="ri"><svg class="ic"><use href="#r-pth"/></svg><span>Points Horizontal</span><span class="caret"></span></div>
      </div>
    </div>
    <div class="glabel">Constraints</div>
  </div>

  <div class="group g-dis">
    <div class="big display">
      <svg class="bigic"><use href="#r-display"/></svg>
      <span>Display</span>
      <span class="caret"></span>
    </div>
    <div class="glabel">Display</div>
  </div>
</section>

<section class="subbar">
  <div class="toolrow">
    <div class="selbar">
      <span class="grip-v"></span>
      <svg class="ic"><use href="#b-sel"/></svg>
      <svg class="ic"><use href="#s-arrow"/></svg>
      <svg class="ic"><use href="#b-box"/></svg>
      <div class="combo w-146"><span>Default</span><span class="dd"></span></div>
      <div class="combo w-146 white"><span class="dim">Any</span><span class="dd"></span></div>
      <div class="combo w-146"><span>Default</span><span class="dd"></span></div>
    </div>
  </div>
  <div class="docrow">
    <div class="doctab"><span class="docname">Scene1*</span><span class="docx">×</span></div>
    <span class="docmenu"></span>
  </div>
</section>

<main class="main">
  <aside class="lefttools">
    <span class="grip-h first"></span>
    <span class="lt short"><svg class="ic"><use href="#t-add"/></svg></span>
    <span class="lt short"><svg class="ic"><use href="#t-ov"/></svg></span>
    <span class="lt-div"></span>
    <span class="lt"><svg class="ic"><use href="#t-ov2"/></svg></span>
    <span class="lt"><svg class="ic"><use href="#t-ov2"/></svg></span>
    <span class="lt"><svg class="ic"><use href="#t-ov3"/></svg></span>
    <span class="lt-more"></span>
    <span class="grip-h"></span>
    <span class="lt"><svg class="ic"><use href="#c-1"/></svg></span>
    <span class="lt"><svg class="ic"><use href="#c-2"/></svg></span>
    <span class="lt"><svg class="ic"><use href="#c-3"/></svg></span>
    <span class="lt"><svg class="ic"><use href="#c-4"/></svg></span>
    <span class="lt"><svg class="ic"><use href="#c-3"/></svg></span>
    <span class="lt"><svg class="ic"><use href="#c-5"/></svg></span>
    <span class="lt"><svg class="ic"><use href="#c-6"/></svg></span>
    <span class="lt"><svg class="ic"><use href="#c-7"/></svg></span>
    <span class="lt"><svg class="ic"><use href="#c-8"/></svg></span>
    <span class="lt"><svg class="ic"><use href="#c-9"/></svg></span>
    <span class="lt-more"></span>
    <span class="grip-h"></span>
    <span class="lt"><svg class="ic"><use href="#t-dim"/></svg></span>
    <span class="lt"><svg class="ic"><use href="#t-dv"/></svg></span>
    <span class="lt"><svg class="ic"><use href="#t-dh"/></svg></span>
    <span class="lt"><svg class="ic"><use href="#t-ang"/></svg></span>
    <span class="lt"><svg class="ic"><use href="#t-rad"/></svg></span>
    <span class="lt"><svg class="ic"><use href="#t-dia"/></svg></span>
    <span class="lt-div"></span>
    <span class="lt"><svg class="ic"><use href="#t-lead"/></svg></span>
    <span class="lt"><svg class="ic"><use href="#t-stack"/></svg></span>
    <span class="lt-more"></span>
  </aside>

  <div class="panel">
    <div class="phead">
      <span>Properties</span>
      <div class="phead-btns">
        <span class="dd big-dd"></span>
        <svg class="pin" viewBox="0 0 10 12"><path d="M3 1h4v5l1 1H2l1-1zM5 7v4" fill="none" stroke="#555" stroke-width="1.200"/></svg>
        <svg class="pin" viewBox="0 0 10 10"><path d="M1 1l8 8M9 1L1 9" stroke="#555" stroke-width="1.200"/></svg>
      </div>
    </div>
    <div class="pbody">
      <div class="sec s-msg"><span class="tri closed"></span><b>Message</b></div>
      <div class="sec s-act"><span class="tri open"></span><b>Actions</b></div>
      <div class="actbar">
        <svg class="ic"><use href="#p-new"/></svg>
        <svg class="ic"><use href="#p-cal"/></svg>
      </div>
      <div class="sec s-prop"><span class="tri open"></span><b>Property</b></div>
      <div class="opt first"><span class="cb on"></span>Display Grid</div>
      <div class="field"><label for="mx">Major X(mm)</label><input id="mx" value="10" readonly></div>
      <div class="field"><label for="my">Major Y(mm)</label><input id="my" value="10" readonly></div>
      <div class="field"><label for="nx">Minor X(mm)</label><input id="nx" value="2.500" readonly></div>
      <div class="field"><label for="ny">Minor Y(mm)</label><input id="ny" value="2.500" readonly></div>
      <div class="opt"><span class="cb"></span>Snap to Grid</div>
      <div class="opt"><span class="cb on"></span>Snap to Construction Geometry</div>
      <div class="opt"><span class="rb"></span>Hide Edited Intellishape</div>
      <div class="opt"><span class="rb"></span>Hide Edited Part</div>
      <div class="opt"><span class="rb"></span>Hide All</div>
      <div class="opt"><span class="rb on"></span>Display All</div>
      <div class="under">UnderDefined</div>
    </div>
    <div class="ptabs">
      <span class="ptab"><svg class="ic"><use href="#p-scene"/></svg>Scene</span>
      <span class="ptab active"><svg class="ic"><use href="#p-props"/></svg>Properties</span>
      <span class="ptab"><svg class="ic"><use href="#p-search"/></svg>Search</span>
    </div>
  </div>

  <div class="splitter"></div>

  <svg class="canvas" viewBox="341 207 1578 777">
    <defs>
      <linearGradient id="sky" x1="0" y1="0" x2="0" y2="1">
        <stop offset="0" stop-color="#4d72a4"/>
        <stop offset=".2" stop-color="#6d91ba"/>
        <stop offset=".45" stop-color="#9bb3d0"/>
        <stop offset=".7" stop-color="#c7d5e4"/>
        <stop offset=".86" stop-color="#e6e8ef"/>
        <stop offset="1" stop-color="#fdf8f6"/>
      </linearGradient>
      <pattern id="grid" patternUnits="userSpaceOnUse" x="398" y="309" width="121.330" height="121.330">
        <path d="M30.830 0V121.330M61.160 0V121.330M91.500 0V121.330M0 30.830H121.330M0 61.160H121.330M0 91.500H121.330" stroke="#98a6bd" stroke-width="1" fill="none"/>
        <path d="M.5 0V121.330M0 .5H121.330" stroke="#747474" stroke-width="1" fill="none"/>
      </pattern>
      <linearGradient id="bodyH" gradientUnits="userSpaceOnUse" x1="1065" y1="0" x2="1791" y2="0">
        <stop offset="0" stop-color="#77777f"/>
        <stop offset=".414" stop-color="#78787f"/>
        <stop offset=".55" stop-color="#82828a"/>
        <stop offset=".7" stop-color="#787880"/>
        <stop offset=".84" stop-color="#64646c"/>
        <stop offset=".93" stop-color="#6f6f77"/>
        <stop offset="1" stop-color="#8c8c94"/>
      </linearGradient>
      <linearGradient id="bodyB" gradientUnits="userSpaceOnUse" x1="0" y1="653" x2="0" y2="703">
        <stop offset="0" stop-color="#727279"/>
        <stop offset=".45" stop-color="#86868e"/>
        <stop offset=".62" stop-color="#75757d"/>
        <stop offset="1" stop-color="#6c6c74"/>
      </linearGradient>
      <linearGradient id="bodyBR" gradientUnits="userSpaceOnUse" x1="1560" y1="0" x2="1750" y2="0">
        <stop offset="0" stop-color="#60606a" stop-opacity="0"/>
        <stop offset=".5" stop-color="#60606a" stop-opacity=".75"/>
        <stop offset="1" stop-color="#7a7a82" stop-opacity=".5"/>
      </linearGradient>
      <linearGradient id="fillet" gradientUnits="userSpaceOnUse" x1="943" y1="370" x2="1017" y2="357">
        <stop offset="0" stop-color="#a4a4ac"/>
        <stop offset=".12" stop-color="#b6b6be"/>
        <stop offset=".3" stop-color="#93939b"/>
        <stop offset=".47" stop-color="#5f5f66"/>
        <stop offset=".75" stop-color="#6d6d75"/>
        <stop offset="1" stop-color="#77777f"/>
      </linearGradient>
      <linearGradient id="corner" gradientUnits="userSpaceOnUse" x1="995" y1="0" x2="1080" y2="0">
        <stop offset="0" stop-color="#a4a4ac"/>
        <stop offset=".2" stop-color="#7c7c84"/>
        <stop offset=".45" stop-color="#5c5c64" stop-opacity=".9"/>
        <stop offset="1" stop-color="#66666e" stop-opacity="0"/>
      </linearGradient>
      <radialGradient id="glow">
        <stop offset="0" stop-color="#eff0f6"/>
        <stop offset=".45" stop-color="#dcdde4" stop-opacity=".9"/>
        <stop offset="1" stop-color="#9a9aa2" stop-opacity="0"/>
      </radialGradient>
      <clipPath id="bodyClip"><path d="M943 370H1791L1742 653C1735 690 1712 703 1683 703H1045C1015 703 998 675 993 653Z"/></clipPath>
    </defs>

    <rect x="341" y="207" width="1578" height="777" fill="url(#sky)"/>
    <rect x="342" y="207" width="1026" height="776" fill="#a07c88" fill-opacity=".1"/>

    <path d="M342 219H369C480 219 600 258 690 352C745 410 830 461 912 461H960L993 642H912C770 642 640 562 592 509C530 452 460 402 369 400H342Z" fill="#7a7a81"/>
    <path d="M342 279H398C520 285 610 340 673 420C720 478 800 520 912 521H980L990 581H912C800 581 720 545 673 502C590 400 510 345 398 340H342Z" fill="#847d81"/>

    <rect x="342" y="207" width="1026" height="776" fill="url(#grid)"/>
    <path d="M341.500 207V983" stroke="#666"/>
    <path d="M341 207.500H1919" stroke="#a8a8a8"/>
    <path d="M342 983.500H1919" stroke="#fff"/>

    <path d="M342 279H398C520 285 610 340 673 420C720 478 800 520 912 521" fill="none" stroke="#222" stroke-width=".8"/>
    <path d="M342 340H398C510 345 590 400 673 502C720 545 800 581 912 581" fill="none" stroke="#222" stroke-width=".8"/>

    <g clip-path="url(#bodyClip)">
      <rect x="940" y="370" width="860" height="283" fill="url(#bodyH)"/>
      <rect x="940" y="653" width="860" height="50" fill="url(#bodyB)"/>
      <rect x="1560" y="653" width="240" height="50" fill="url(#bodyBR)"/>
      <ellipse cx="1490" cy="673" rx="112" ry="20" fill="url(#glow)"/>
      <rect x="930" y="370" width="135" height="283" fill="url(#fillet)"/>
      <rect x="990" y="653" width="90" height="50" fill="url(#corner)"/>
    </g>
    <path d="M943 370.500H1791" stroke="#3e3e44" stroke-width="1.200"/>
    <path d="M1045 703H1683" stroke="#4a4a50" stroke-width="1"/>
    <path d="M993 653.500H1742" stroke="#24242a" stroke-width="1.100"/>
    <path d="M1065 370V703M1367.500 370V703" stroke="#2e2e34" stroke-width="1"/>

    <path d="M342 219H369C480 219 600 258 690 352C745 410 830 461 912 461H960" fill="none" stroke="#fff" stroke-width="2.200"/>
    <path d="M342 400H369C460 402 530 452 592 509C640 562 770 642 912 642H993" fill="none" stroke="#fff" stroke-width="2.200"/>
    <path d="M960 461H1125V642H993" fill="none" stroke="#f0f0f0" stroke-width="1.500" stroke-dasharray="7 4"/>

    <path d="M943 371L993 653" stroke="#f6f01c" stroke-width="2.600"/>

    <g class="dimline">
      <path d="M905 377.500L943 371M953 660L993 653M915 376L964 659M681 653H993"/>
      <path d="M961 465A190.500 190.500 0 0 0 803 640"/>
    </g>
    <path d="M915 376l-4 9h7zM961 465l-11-4v8zM803 651l-4-10h8z" fill="#2b82f0"/>

    <g fill="#fff" stroke="#111" stroke-width=".9">
      <circle cx="369" cy="219" r="2.300"/><circle cx="369" cy="400" r="2.300"/>
      <circle cx="690" cy="352" r="2.300"/><circle cx="720" cy="381" r="2.300"/>
      <circle cx="562" cy="480" r="2.300"/><circle cx="592" cy="509" r="2.300"/>
      <circle cx="912" cy="461" r="2.300"/><circle cx="912" cy="642" r="2.300"/>
      <circle cx="1125" cy="461" r="2.300"/><circle cx="1125" cy="642" r="2.300"/>
    </g>
    <g fill="#0a14c8" stroke="#113" stroke-width=".5">
      <circle cx="915" cy="376" r="2.600"/><circle cx="961" cy="465" r="2.600"/><circle cx="964" cy="659" r="2.600"/>
    </g>
    <g fill="#e01020" stroke="#411" stroke-width=".6">
      <circle cx="943" cy="371" r="2.400"/><circle cx="993" cy="653" r="2.400"/>
    </g>

    <rect x="822" y="521" width="49" height="19" fill="#fff"/>
    <text x="846.500" y="536" class="dimtext">80.000</text>
    <rect x="914" y="507" width="49" height="20" fill="#fff"/>
    <text x="938.500" y="522.500" class="dimtext">23.729</text>

    <path d="M379 928l-3 9h7z" fill="#0e1a8c"/>
    <path d="M379 937V947" stroke="#9a9ae8" stroke-width="2"/>
    <path d="M379 947H368" stroke="#90e090" stroke-width="2"/>
    <path d="M358 947l11-4v7z" fill="#2ca82c"/>
    <text x="380" y="921" class="axis az">Z</text>
    <text x="351.500" y="950" class="axis ay">Y</text>
    <text x="387.500" y="950" class="axis ax">X</text>
  </svg>
</main>

<section class="catalog">
  <div class="cat-inner"><svg class="ic"><use href="#p-cat"/></svg><span>Catalog Browser</span></div>
</section>

<footer class="status">
  <div class="status-msg">Select an edge or face to project.&nbsp; Right click to create associativity constraints.</div>
  <div class="status-right">
    <span class="coords">X: -128.327 Y: 77.600 Z: 0.000</span>
    <span>Units: mm, deg</span>
    <span class="sl"><svg class="ic"><use href="#s-zoom"/></svg></span>
    <span class="sl"><svg class="ic"><use href="#s-zoom2"/></svg><span class="caret"></span></span>
    <span class="sl"><svg class="ic"><use href="#s-y"/></svg><span class="caret"></span></span>
    <span class="sl"><svg class="ic"><use href="#s-blue"/></svg><span class="caret"></span></span>
    <span class="sl"><svg class="ic"><use href="#s-fig"/></svg><span class="caret"></span></span>
    <span class="sl"><svg class="ic"><use href="#s-wedge"/></svg></span>
    <span class="sl"><svg class="ic"><use href="#s-glass"/></svg><span class="caret"></span></span>
    <span class="sl hl"><svg class="ic"><use href="#s-box"/></svg><span class="caret"></span></span>
    <span class="sl"><svg class="ic"><use href="#s-step"/></svg><span class="caret"></span></span>
    <span class="sl"><svg class="ic"><use href="#s-sel"/></svg></span>
    <span class="sl"><svg class="ic"><use href="#s-arrow"/></svg></span>
    <span class="sl"><svg class="ic"><use href="#s-arrow2"/></svg></span>
    <div class="combo w-89 mute"><span>Any</span><span class="dd"></span></div>
    <div class="combo w-64 mute"><span>Default</span><span class="dd"></span></div>
    <span class="sl"><svg class="ic"><use href="#s-org"/></svg></span>
  </div>
</footer>
</body>
</html>
```

FILE: styles.css
```css
* { box-sizing: border-box; }
html, body { margin: 0; padding: 0; }
body {
  width: 1919px;
  height: 1040px;
  overflow: hidden;
  display: flex;
  flex-direction: column;
  font: 11.5px/1.2 "Open Sans", "Liberation Sans", sans-serif;
  color: #3c3c3c;
  background: #e6e6e6;
}
.sprite { width: 0; height: 0; position: absolute; }
.ic { width: 16px; height: 16px; flex: none; display: block; }
u { text-decoration: underline; }

.caret {
  display: inline-block;
  width: 0;
  height: 0;
  margin-left: 5px;
  border-left: 3px solid transparent;
  border-right: 3px solid transparent;
  border-top: 3px solid #444;
  vertical-align: middle;
  flex: none;
}
.caret.white { border-top-color: #fff; }

/* title bar */
.titlebar { height: 26px; background: #2b579a; display: flex; align-items: center; color: #fff; flex: none; }
.qat { display: flex; align-items: center; gap: 8px; padding-left: 2px; width: 1061px; }
.logo { margin-right: 3px; }
.qon { background: #3b68a8; box-shadow: 0 0 0 3px #3b68a8; }
.qat .caret { margin-left: -7px; }
.qat-more { width: 6px; height: 5px; margin-left: 8px; border-top: 1px solid #fff; border-bottom: 3px solid #fff; opacity: .8; }
.title { font-size: 11.5px; width: 180px; white-space: nowrap; }
.winbtns { margin-left: auto; display: flex; gap: 25px; padding-right: 11px; align-items: center; }
.wb { width: 12px; height: 12px; display: block; }
.wb.sm { width: 11px; height: 11px; }

/* tabs */
.tabs { height: 30px; background: #2b579a; display: flex; align-items: flex-end; flex: none; }
.tabstrip { display: grid; grid-template-columns: 61px 65px 65px 62px 69px 79px 94px 54px 107px 94px 92px 79px 74px; }
.tab { color: #fff; font-size: 11.35px; height: 26px; line-height: 25px; text-align: center; white-space: nowrap; }
.tab.active { background: #f1f1f1; color: #2b579a; }
.tabs-right { margin-left: auto; display: flex; align-items: center; height: 26px; padding-right: 1px; padding-bottom: 4px; }
.styles { color: #fff; font-size: 11.35px; }
.tabs-right .caret { margin-left: 8px; }
.help { width: 16px; height: 16px; margin-left: 3px; }
.tabs-right .help + .caret { margin-left: 9px; }
.tabs-right .wb.sm { margin-left: 8px; }
.tabs-right .caret + .wb.sm { margin-left: 9px; }

/* ribbon */
.ribbon { height: 98px; background: #f1f1f1; display: flex; border-bottom: 1px solid #d4d4d4; flex: none; }
.group { position: relative; display: flex; flex-direction: column; padding-top: 5px; height: 95px; border-right: 1px solid #dadada; flex: none; }
.g-sketch { width: 55px; padding-left: 2px; }
.g-draw { width: 461px; padding-left: 9px; }
.g-mod { width: 346px; padding-left: 9px; }
.g-con { width: 569px; }
.g-dis { width: 52px; padding-left: 3px; }
.glabel { position: absolute; left: 0; right: 0; top: 77px; text-align: center; color: #777; font-size: 11.7px; line-height: 16px; }
.g-sketch .glabel { left: 2px; }
.rgrid { display: grid; grid-auto-rows: 22px; height: 66px; }
.draw-cols { grid-template-columns: 92px 117px 73px 74px 90px; }
.mod-cols { grid-template-columns: 60px 108px 61px 100px; }
.con-cols { grid-template-columns: 99.500px 83px 96px 83px 120px; flex: none; }
.con-row { display: flex; }
.ri { display: flex; align-items: center; gap: 3px; white-space: nowrap; position: relative; }
.ri .caret { margin-left: 1px; }
.hl-soft { background: #dedede; margin-left: -4px; padding-left: 4px; width: 93px; }
.hl-strong { background: #c6c6c6; display: flex; align-items: center; gap: 4px; height: 22px; margin-left: -2px; padding: 0 1px 0 2px; }
.big { display: flex; flex-direction: column; align-items: center; }
.finish { padding-top: 5px; }
.check { width: 34px; height: 28px; margin-bottom: 6px; }
.finish .caret { margin: 7px 0 0; }
.smart { width: 81px; padding-top: 4px; line-height: 15px; flex: none; }
.bigic { width: 32px; height: 32px; display: block; margin-bottom: 3px; }
.display { padding-top: 4px; }
.display .caret { margin: 7px 0 0; }

/* sub bar */
.subbar { height: 53px; background: #e6e6e6; flex: none; }
.toolrow { height: 31px; }
.selbar { width: 550px; height: 31px; background: #f0f0f0; display: flex; align-items: center; padding-left: 4px; }
.grip-v { width: 2px; height: 20px; margin-right: 6px; background-image: linear-gradient(#999 50%, transparent 50%); background-size: 2px 4px; }
.selbar .ic { margin-right: 6px; }
.combo { height: 24px; background: #e4e4e4; border: 1px solid #cfcfcf; display: flex; align-items: center; justify-content: space-between; padding: 0 6px 0 3px; color: #222; flex: none; }
.combo.white { background: linear-gradient(90deg, #fff 85%, #e8e8e8 85%); }
.combo .dim { color: #888; }
.w-146 { width: 146px; margin-right: 4px; }
.w-89 { width: 88px; height: 20px; }
.w-64 { width: 64px; height: 20px; }
.combo.mute { background: #ececec; color: #999; }
.dd { width: 0; height: 0; border-left: 3px solid transparent; border-right: 3px solid transparent; border-top: 3px solid #aaa; }
.docrow { height: 22px; display: flex; align-items: flex-end; position: relative; }
.doctab { margin-left: 27px; width: 108px; height: 20px; background: #f6f6f6; clip-path: polygon(0 100%, 18px 0, 100% 0, 100% 100%); display: flex; align-items: center; padding-left: 34px; gap: 13px; color: #333; border-right: 1px solid #aaa; font-weight: 600; }
.docx { font-size: 15px; font-weight: 400; line-height: 15px; color: #444; }
.docmenu { margin-left: auto; margin-right: 5px; margin-bottom: 7px; border-left: 5px solid transparent; border-right: 5px solid transparent; border-top: 5px solid #777; }

/* main */
.main { display: flex; height: 777px; flex: none; }
.lefttools { width: 26px; background: #e6e6e6; display: flex; flex-direction: column; align-items: center; padding-top: 166px; flex: none; }
.grip-h { width: 14px; height: 2px; margin: 6px 0 5px; flex: none; background-image: linear-gradient(90deg, #999 50%, transparent 50%); background-size: 4px 2px; }
.grip-h.first { margin: 0 0 6px; }
.lt { height: 22px; display: flex; align-items: center; justify-content: center; flex: none; width: 100%; }
.lt.short { height: 20px; }
.lt-div { width: 22px; height: 1px; background: #cfcfcf; margin: 6px 0 3px; flex: none; }
.lt-more { width: 0; height: 0; margin: 2px 0 3px -6px; border-top: 3px solid transparent; border-bottom: 3px solid transparent; border-right: 4px solid #555; flex: none; }

.panel { width: 308px; display: flex; flex-direction: column; flex: none; }
.phead { height: 25px; display: flex; align-items: center; justify-content: space-between; padding: 0 6px 2px 4px; color: #555; }
.phead-btns { display: flex; align-items: center; gap: 9px; }
.big-dd { border-left-width: 5px; border-right-width: 5px; border-top: 5px solid #666; }
.pin { width: 10px; height: 11px; display: block; }
.pbody { height: 730px; background: #fff; padding: 0 6px; color: #222; }
.sec { display: flex; align-items: center; height: 21px; position: relative; padding-left: 22px; color: #333; }
.sec b { font-weight: 700; font-size: 11.2px; }
.s-msg { height: 26px; }
.s-act { height: 20px; padding-top: 2px; }
.s-prop { margin-top: 10px; }
.tri { position: absolute; left: 6px; width: 0; height: 0; }
.tri.closed { border-left: 5px solid #ddd; border-top: 4px solid transparent; border-bottom: 4px solid transparent; }
.tri.open { border-right: 5px solid #bbb; border-top: 5px solid transparent; margin-top: 1px; }
.actbar { height: 24px; background: #f0f0f0; display: flex; align-items: center; gap: 6px; padding-left: 12px; }
.opt { height: 21px; display: flex; align-items: center; gap: 5px; white-space: nowrap; }
.opt.first { height: 15px; margin-bottom: 2px; }
.cb, .rb { width: 13px; height: 13px; border: 1px solid #444; background: #fff; flex: none; position: relative; display: block; }
.cb.on::after { content: ""; position: absolute; left: 3.500px; top: .5px; width: 4px; height: 8px; border: solid #333; border-width: 0 1.500px 1.500px 0; transform: rotate(40deg); }
.rb { border-radius: 50%; }
.rb.on::after { content: ""; position: absolute; left: 2px; top: 2px; width: 7px; height: 7px; border-radius: 50%; background: #222; }
.field { height: 25px; display: flex; align-items: center; }
.field label { width: 77px; flex: none; }
.field input { width: 219px; height: 19px; border: 1px solid #555; padding: 0 4px; font: inherit; color: #222; outline: none; background: #fff; border-radius: 0; margin: 0; }
.under { margin: 4px 1px 0; height: 19px; background: #c8c8c8; color: #8c8c8c; text-align: center; line-height: 17px; border: 1px solid #c2c2c2; }
.ptabs { height: 22px; display: flex; background: #e6e6e6; padding-left: 6px; }
.ptab { display: flex; align-items: center; gap: 4px; height: 22px; color: #555; white-space: nowrap; }
.ptab:first-child { width: 54px; }
.ptab:first-child .ic { width: 12px; }
.ptab.active { background: #fff; border: 1px solid #bbb; border-top: 0; width: 80px; padding-left: 4px; color: #444; gap: 3px; flex: none; }
.ptab.active .ic { width: 14px; }
.ptab:last-child { padding-left: 6px; gap: 3px; }
.ptab:last-child .ic { width: 15px; }
.splitter { width: 7px; background: #e6e6e6; flex: none; }
.canvas { width: 1578px; height: 777px; display: block; flex: none; }
.dimline path { fill: none; stroke: #2b82f0; stroke-width: 1.300; }
.dimtext { font: 16px "Liberation Sans", sans-serif; fill: #1a88ff; text-anchor: middle; }
.axis { font: 700 10px "Liberation Sans", sans-serif; text-anchor: middle; }
.az { fill: #1818e8; }
.ay { fill: #28e828; }
.ax { fill: #e81818; }
.svgmini { font: 700 6.500px "Liberation Sans", sans-serif; }
.svghelp { font: 700 13px "Liberation Sans", sans-serif; fill: #e01010; text-anchor: middle; }

/* bottom */
.catalog { height: 32px; background: #e6e6e6; padding: 7px 0 0 7px; flex: none; }
.cat-inner { width: 104px; height: 25px; display: flex; gap: 3px; color: #555; border-bottom: 6px solid #d9d9d9; white-space: nowrap; align-items: flex-start; }
.status { height: 24px; background: #f1f1f1; border-top: 1px solid #c8c8c8; display: flex; align-items: center; padding: 0 0 1px 2px; color: #333; flex: none; font-size: 11.4px; }
.status-msg { width: 1124px; white-space: nowrap; }
.status-right { display: grid; grid-template-columns: 167px 93px 23px 35px 35px 36px 34px 24px 31px 34px 32px 30px 24px 16px 90px 69px 16px; align-items: center; white-space: nowrap; }
.coords { font-size: 11px; }
.sl { display: flex; align-items: center; height: 23px; }
.sl .caret { margin-left: 7px; }
.sl.hl { background: #c8c8c8; margin: 0 4px 0 -1px; padding-left: 1px; }
.sl.hl .caret { margin-left: 2px; }
```
